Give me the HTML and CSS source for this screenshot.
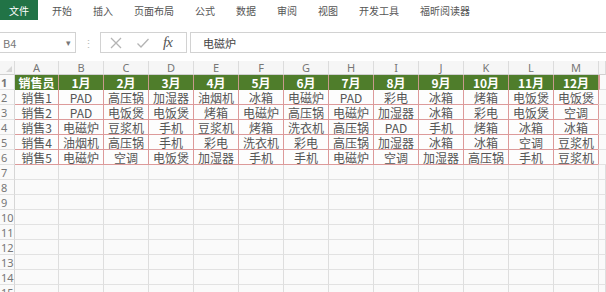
FILE: index.html
```html
<!DOCTYPE html>
<html lang="zh-CN">

<head>
    <meta charset="UTF-8">
    <meta name="viewport" content="width=device-width, initial-scale=1.0">
    <title>销售表</title>
    <link rel="stylesheet" href="styles.css">
</head>

<body>
    <div class="tabs">
        <div class="tab-file">文件</div>
        <div class="tab">开始</div>
        <div class="tab">插入</div>
        <div class="tab">页面布局</div>
        <div class="tab">公式</div>
        <div class="tab">数据</div>
        <div class="tab">审阅</div>
        <div class="tab">视图</div>
        <div class="tab">开发工具</div>
        <div class="tab">福昕阅读器</div>
    </div>

    <div class="fbar">
        <div class="namebox">
            <span>B4</span>
            <span class="arrow">&#9662;</span>
        </div>
        <div class="sep">&#8942;</div>
        <div class="fxbox">
            <svg width="14" height="14" viewBox="0 0 14 14">
                <path d="M2 2 L12 12 M12 2 L2 12" stroke="#b4b4b4" stroke-width="1.3" fill="none" />
            </svg>
            <svg width="14" height="14" viewBox="0 0 14 14">
                <path d="M1.5 7.5 L5 11 L12.5 3" stroke="#b4b4b4" stroke-width="1.3" fill="none" />
            </svg>
            <span class="fx">fx</span>
        </div>
        <div class="finput">电磁炉</div>
    </div>

    <div class="sheet">
        <div class="row colhead">
            <div class="corner"></div>
            <div>A</div><div>B</div><div>C</div><div>D</div><div>E</div><div>F</div><div>G</div>
            <div>H</div><div>I</div><div>J</div><div>K</div><div>L</div><div>M</div><div></div>
        </div>

        <div class="row head">
            <div class="rn">1</div>
            <div>销售员</div><div>1月</div><div>2月</div><div>3月</div><div>4月</div><div>5月</div><div>6月</div>
            <div>7月</div><div>8月</div><div>9月</div><div>10月</div><div>11月</div><div>12月</div><div class="pad"></div>
        </div>
        <div class="row data">
            <div class="rn">2</div>
            <div>销售1</div><div>PAD</div><div>高压锅</div><div>加湿器</div><div>油烟机</div><div>冰箱</div><div>电磁炉</div>
            <div>PAD</div><div>彩电</div><div>冰箱</div><div>烤箱</div><div>电饭煲</div><div>电饭煲</div><div class="pad"></div>
        </div>
        <div class="row data">
            <div class="rn">3</div>
            <div>销售2</div><div>PAD</div><div>电饭煲</div><div>电饭煲</div><div>烤箱</div><div>电磁炉</div><div>高压锅</div>
            <div>电磁炉</div><div>加湿器</div><div>冰箱</div><div>彩电</div><div>电饭煲</div><div>空调</div><div class="pad"></div>
        </div>
        <div class="row data">
            <div class="rn">4</div>
            <div>销售3</div><div>电磁炉</div><div>豆浆机</div><div>手机</div><div>豆浆机</div><div>烤箱</div><div>洗衣机</div>
            <div>高压锅</div><div>PAD</div><div>手机</div><div>烤箱</div><div>冰箱</div><div>冰箱</div><div class="pad"></div>
        </div>
        <div class="row data">
            <div class="rn">5</div>
            <div>销售4</div><div>油烟机</div><div>高压锅</div><div>手机</div><div>彩电</div><div>洗衣机</div><div>彩电</div>
            <div>高压锅</div><div>加湿器</div><div>冰箱</div><div>冰箱</div><div>空调</div><div>豆浆机</div><div class="pad"></div>
        </div>
        <div class="row data">
            <div class="rn">6</div>
            <div>销售5</div><div>电磁炉</div><div>空调</div><div>电饭煲</div><div>加湿器</div><div>手机</div><div>手机</div>
            <div>电磁炉</div><div>空调</div><div>加湿器</div><div>高压锅</div><div>手机</div><div>豆浆机</div><div class="pad"></div>
        </div>

        <div class="row empty"><div class="rn">7</div><div></div><div></div><div></div><div></div><div></div><div></div><div></div><div></div><div></div><div></div><div></div><div></div><div></div><div></div></div>
        <div class="row empty"><div class="rn">8</div><div></div><div></div><div></div><div></div><div></div><div></div><div></div><div></div><div></div><div></div><div></div><div></div><div></div><div></div></div>
        <div class="row empty"><div class="rn">9</div><div></div><div></div><div></div><div></div><div></div><div></div><div></div><div></div><div></div><div></div><div></div><div></div><div></div><div></div></div>
        <div class="row empty"><div class="rn">10</div><div></div><div></div><div></div><div></div><div></div><div></div><div></div><div></div><div></div><div></div><div></div><div></div><div></div><div></div></div>
        <div class="row empty"><div class="rn">11</div><div></div><div></div><div></div><div></div><div></div><div></div><div></div><div></div><div></div><div></div><div></div><div></div><div></div><div></div></div>
        <div class="row empty"><div class="rn">12</div><div></div><div></div><div></div><div></div><div></div><div></div><div></div><div></div><div></div><div></div><div></div><div></div><div></div><div></div></div>
        <div class="row empty"><div class="rn">13</div><div></div><div></div><div></div><div></div><div></div><div></div><div></div><div></div><div></div><div></div><div></div><div></div><div></div><div></div></div>
        <div class="row empty"><div class="rn">14</div><div></div><div></div><div></div><div></div><div></div><div></div><div></div><div></div><div></div><div></div><div></div><div></div><div></div><div></div></div>
        <div class="row empty"><div class="rn">15</div><div></div><div></div><div></div><div></div><div></div><div></div><div></div><div></div><div></div><div></div><div></div><div></div><div></div><div></div></div>
    </div>
</body>

</html>
```

FILE: styles.css
```css
body {
    margin: 0;
    background: #fff;
    font-family: "Noto Sans CJK SC", "Noto Sans", sans-serif;
    overflow: hidden;
}

/* ribbon tabs */
.tabs {
    display: flex;
    align-items: center;
    height: 20px;
    font-size: 10px;
    color: #555;
}

.tab-file {
    width: 38px;
    height: 20px;
    background: #217346;
    color: #fff;
    display: flex;
    align-items: center;
    justify-content: center;
    margin-right: 14px;
}

.tab {
    margin-right: 21px;
}

/* formula bar */
.fbar {
    display: flex;
    height: 21px;
    margin-top: 12px;
    font-size: 11px;
    color: #555;
}

.namebox {
    width: 76px;
    box-sizing: border-box;
    border: 1px solid #d2d2d2;
    border-left: none;
    display: flex;
    align-items: center;
    justify-content: space-between;
    padding: 0 4px 0 3px;
    color: #777;
}

.namebox .arrow {
    font-size: 9px;
    color: #777;
}

.sep {
    width: 24px;
    display: flex;
    align-items: center;
    justify-content: center;
    color: #bbb;
    font-size: 11px;
}

.fxbox {
    width: 87px;
    box-sizing: border-box;
    border: 1px solid #d2d2d2;
    display: flex;
    align-items: center;
    padding-left: 8px;
    gap: 13px;
}

.fx {
    font-family: "Liberation Serif", serif;
    font-style: italic;
    font-size: 15px;
    color: #555;
    letter-spacing: -1px;
}

.finput {
    flex: 1;
    margin-left: 3px;
    box-sizing: border-box;
    border: 1px solid #d2d2d2;
    border-right: none;
    display: flex;
    align-items: center;
    padding-left: 12px;
    color: #444;
}

/* sheet */
.sheet {
    margin-top: 8px;
    background: #fafafa;
}

.row {
    display: grid;
    grid-template-columns: 15px 44px repeat(12, 45px) 1fr;
    height: 15px;
    line-height: 13px;
}

.row > div {
    box-sizing: border-box;
    display: flex;
    align-items: center;
    justify-content: center;
    white-space: nowrap;
    overflow: hidden;
}

.colhead {
    height: 14px;
    background: #f6f6f6;
    font-family: "Noto Sans", sans-serif;
    font-size: 11px;
    color: #777;
}

.colhead > div {
    border-right: 1px solid #dcdcdc;
    border-bottom: 1px solid #d0d0d0;
}

.corner {
    position: relative;
}

.corner::after {
    content: "";
    position: absolute;
    right: 2px;
    bottom: 2px;
    border-left: 6px solid transparent;
    border-bottom: 6px solid #d6d6d6;
}

.row > .rn {
    justify-content: flex-start;
    padding-left: 1px;
    font-family: "Noto Sans", sans-serif;
    font-size: 11px;
    color: #777;
    background: #fafafa;
    border-right: 1px solid #d6d6d6;
    border-bottom: 1px solid #e2e2e2;
}

.head > div {
    background: #4f7d2b;
    color: #fff;
    font-weight: bold;
    font-size: 12px;
    border-right: 1px solid #c99a8c;
}

.data > div {
    font-size: 12px;
    color: #555;
    background: #fdfdfd;
    border-right: 1px solid #dc9a9a;
    border-bottom: 1px solid #dc9a9a;
}

.head > .pad,
.data > .pad {
    background: #fafafa;
    border-right: none;
    border-bottom: 1px solid #e2e2e2;
}

.head > .pad {
    border-left: 1px solid #dc9a9a;
}

.data > .pad {
    border-left: 1px solid #dc9a9a;
    margin-left: -1px;
}

.empty > div {
    border-right: 1px solid #dedede;
    border-bottom: 1px solid #e2e2e2;
}
```
